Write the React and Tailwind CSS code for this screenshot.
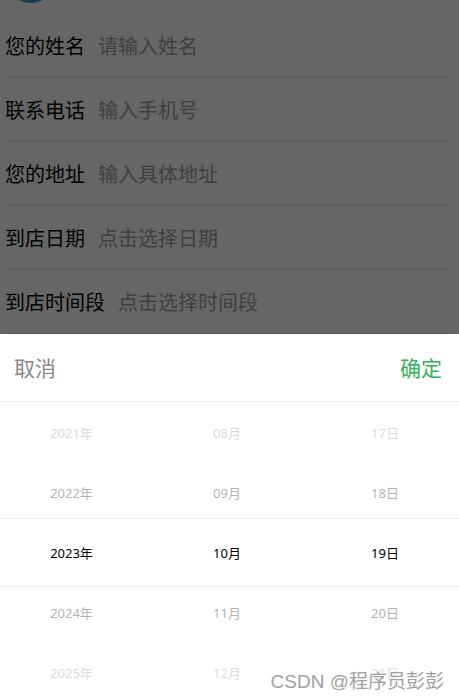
const fields = [
  { label: "您的姓名", placeholder: "请输入姓名" },
  { label: "联系电话", placeholder: "输入手机号" },
  { label: "您的地址", placeholder: "输入具体地址" },
  { label: "到店日期", placeholder: "点击选择日期" },
  { label: "到店时间段", placeholder: "点击选择时间段" },
];

const rows = [
  { y: "2021年", m: "08月", d: "17日", tone: "text-[#d9d9d9]" },
  { y: "2022年", m: "09月", d: "18日", tone: "text-[#b3b3b3]" },
  { y: "2023年", m: "10月", d: "19日", tone: "text-black" },
  { y: "2024年", m: "11月", d: "20日", tone: "text-[#b3b3b3]" },
  { y: "2025年", m: "12月", d: "21日", tone: "text-[#dcdcdc]" },
];

const cjk = { fontFamily: '"Noto Sans CJK SC", "Noto Sans", sans-serif' };
const latinFirst = { fontFamily: '"Noto Sans", "Noto Sans CJK SC", sans-serif' };
const mark = {
  fontFamily: '"Liberation Sans", "Noto Sans CJK SC", sans-serif',
  textShadow: "0 0 2px #fff, 0 0 2px #fff",
};

export default function App() {
  return (
    <div className="relative w-[459px] h-[700px] overflow-hidden bg-white" style={cjk}>
      {/* form underneath */}
      <div className="h-[14px] overflow-hidden">
        <div className="ml-[6px] mt-[-47px] w-[50px] h-[50px] rounded-full bg-[#2a9fb5]" />
      </div>
      {fields.map((f) => (
        <div
          key={f.label}
          className="flex items-center h-[64px] ml-[5px] mr-[9px] border-b border-[#dedede] last:border-b-0"
        >
          <span className="text-[20px] text-black leading-none">{f.label}</span>
          <span className="ml-[13px] text-[20px] text-[#9e9e9e] leading-none">{f.placeholder}</span>
        </div>
      ))}

      {/* mask */}
      <div className="absolute inset-0 bg-black/60" />

      {/* date picker sheet */}
      <div className="absolute left-0 right-0 bottom-0 h-[366px] bg-white">
        <div className="flex items-center justify-between h-[68px] pl-[14px] pr-[17px] border-b border-[#f2f2f2]">
          <span className="text-[21px] text-[#888888]">取消</span>
          <span className="text-[21px] text-[#2fb457]">确定</span>
        </div>
        <div className="relative pt-[2px]" style={latinFirst}>
          <div className="absolute left-0 right-0 top-[116px] h-[69px] border-y border-[#f2f2f2]" />
          {rows.map((r) => (
            <div
              key={r.y}
              className={`grid grid-cols-[143px_168px_1fr] items-center h-[60px] text-[13px] text-center ${r.tone}`}
            >
              <span>{r.y}</span>
              <span>{r.m}</span>
              <span>{r.d}</span>
            </div>
          ))}
        </div>
      </div>

      {/* watermark */}
      <div
        className="absolute right-[15px] bottom-[9px] text-[19px] text-[#a0a0a0] leading-none"
        style={mark}
      >
        CSDN @程序员彭彭
      </div>
    </div>
  );
}
